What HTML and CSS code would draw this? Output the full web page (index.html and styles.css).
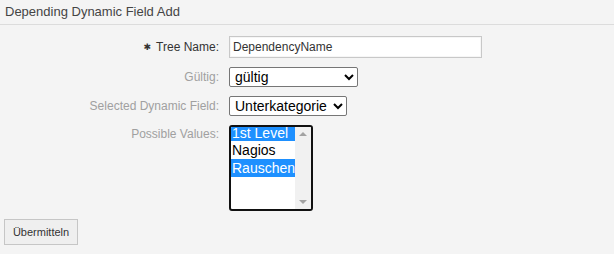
FILE: index.html
```html
<!DOCTYPE html>
<html lang="de">
<head>
    <meta charset="UTF-8">
    <title>Depending Dynamic Field Add</title>
    <link rel="stylesheet" href="styles.css">
</head>
<body>
    <div class="header">Depending Dynamic Field Add</div>

    <form class="field-form">
        <div class="form-row">
            <label class="label required" for="tree-name"><span class="star">&#10033;</span> Tree Name:</label>
            <input type="text" id="tree-name" class="text-input" value="DependencyName">
        </div>
        <div class="form-row">
            <label class="label" for="valid">Gültig:</label>
            <select id="valid" class="select select-valid">
                <option>gültig</option>
                <option>ungültig</option>
            </select>
        </div>
        <div class="form-row">
            <label class="label" for="dyn-field">Selected Dynamic Field:</label>
            <select id="dyn-field" class="select select-field">
                <option>Unterkategorie</option>
            </select>
        </div>
        <div class="form-row top">
            <label class="label">Possible Values:</label>
            <div class="listbox">
                <div class="options">
                    <div class="option selected first">1st Level</div>
                    <div class="option">Nagios</div>
                    <div class="option selected">Rauschen</div>
                </div>
                <div class="scrollbar">
                    <span class="arrow up"></span>
                    <span class="arrow down"></span>
                </div>
            </div>
        </div>

        <button type="button" class="submit-button">Übermitteln</button>
    </form>
</body>
</html>
```

FILE: styles.css
```css
body {
    margin: 0;
    background: #f4f4f4;
    font-family: "Liberation Sans", Arial, sans-serif;
    color: #333;
}
.header {
    height: 24px;
    line-height: 23px;
    padding: 0 5px;
    font-size: 13px;
    color: #444;
    border-bottom: 1px solid #dcdcdc;
}
.field-form {
    padding: 11px 4px 0;
}
.form-row {
    display: grid;
    grid-template-columns: 215px auto;
    column-gap: 10px;
    align-items: center;
    margin-bottom: 9px;
}
.form-row.top {
    align-items: start;
    margin-bottom: 8px;
}
.label {
    text-align: right;
    font-size: 12px;
    color: #a0a0a0;
}
.form-row.top .label {
    padding-top: 2px;
}
.label.required {
    color: #333;
}
.star {
    font-family: "DejaVu Sans", sans-serif;
    font-size: 9px;
    margin-right: 2px;
    position: relative;
    top: -1px;
}
.text-input {
    box-sizing: border-box;
    width: 253px;
    height: 22px;
    padding: 0 3px;
    border: 1px solid #c8c8c8;
    box-shadow: inset 0 0 0 1px #f6f6f6;
    background: #fff;
    font-family: "Liberation Sans", Arial, sans-serif;
    font-size: 12px;
    color: #333;
}
.select {
    box-sizing: border-box;
    height: 20px;
    padding: 0 0 0 1px;
    border: 1px solid #767676;
    border-radius: 2px;
    background: #fff;
    font-family: "Liberation Sans", Arial, sans-serif;
    font-size: 14px;
    color: #000;
}
.select-valid {
    width: 129px;
}
.select-field {
    width: 118px;
}
.listbox {
    display: flex;
    box-sizing: border-box;
    width: 84px;
    height: 86px;
    border: 2px solid #111;
    border-radius: 3px;
    background: #fff;
    overflow: hidden;
}
.options {
    flex: 1;
}
.option {
    height: 18px;
    line-height: 18px;
    padding-left: 1px;
    font-size: 14px;
    color: #000;
    white-space: nowrap;
}
.option.first {
    height: 14px;
    line-height: 13px;
}
.option.selected {
    background: #1e90ff;
    color: #fff;
}
.scrollbar {
    position: relative;
    width: 16px;
    background: #f1f1f1;
}
.arrow {
    position: absolute;
    left: 4px;
    width: 0;
    height: 0;
    border-left: 4px solid transparent;
    border-right: 4px solid transparent;
}
.arrow.up {
    top: 5px;
    border-bottom: 4px solid #a3a3a3;
}
.arrow.down {
    bottom: 5px;
    border-top: 4px solid #a3a3a3;
}
.submit-button {
    width: 74px;
    height: 26px;
    padding: 0;
    border: 1px solid #c6c6c6;
    background: #efefef;
    font-family: "Liberation Sans", Arial, sans-serif;
    font-size: 11px;
    color: #333;
}
```
